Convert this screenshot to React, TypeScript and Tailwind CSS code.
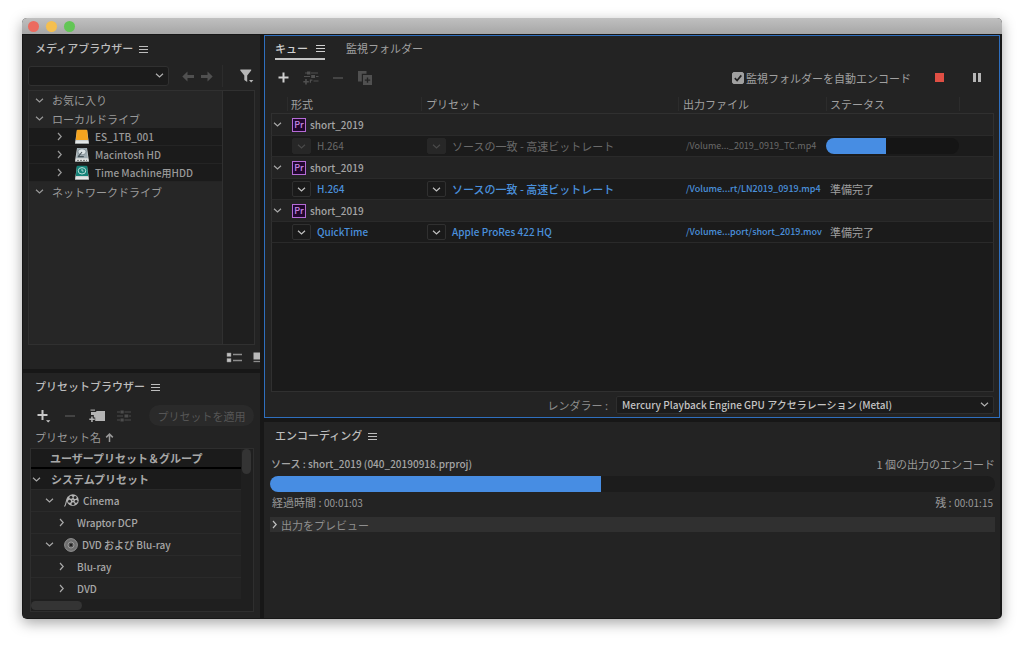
import React, { useState } from 'react';

interface SvgProps {
  className?: string;
}

const ChevronDown: React.FC<SvgProps> = ({ className = '' }) => (
  <svg viewBox="0 0 9 9" className={`w-[9px] h-[9px] shrink-0 ${className}`} fill="none" stroke="currentColor" strokeWidth="1.2">
    <path d="M1 2.8 4.5 6 8 2.8" />
  </svg>
);

const ChevronRight: React.FC<SvgProps> = ({ className = '' }) => (
  <svg viewBox="0 0 9 9" className={`w-[9px] h-[9px] shrink-0 ${className}`} fill="none" stroke="currentColor" strokeWidth="1.2">
    <path d="M3 1 6.2 4.5 3 8" />
  </svg>
);

const Menu: React.FC = () => (
  <svg viewBox="0 0 9 9" className="w-[9px] h-[9px]" fill="none" stroke="currentColor" strokeWidth="1">
    <path d="M0 1.5h9M0 4.5h9M0 7.5h9" />
  </svg>
);

const ArrowLeft: React.FC<SvgProps> = ({ className = '' }) => (
  <svg viewBox="0 0 12 11" className={`w-3 h-[11px] ${className}`} fill="currentColor">
    <path d="M0.3 5.5 5.5 0.5V3.9H12V7.1H5.5V10.5Z" />
  </svg>
);

const Funnel: React.FC = () => (
  <svg viewBox="0 0 14 14" className="w-3.5 h-3.5" fill="currentColor">
    <path d="M0.3 0.5H11.2V1.6L7.2 6.6V13L4.3 11V6.6L0.3 1.6Z" />
    <path d="M9 11h4.4L11.2 13.4Z" />
  </svg>
);

const Plus: React.FC = () => (
  <svg viewBox="0 0 11 11" className="w-[11px] h-[11px]" stroke="currentColor" strokeWidth="2">
    <path d="M5.5 0.5v10M0.5 5.5h10" />
  </svg>
);

const PlusMenu: React.FC = () => (
  <svg viewBox="0 0 15 15" className="w-[15px] h-[15px]" fill="currentColor">
    <path d="M5.5 2h2v4h4v2h-4v4h-2V8h-4V6h4Z" />
    <path d="M10 12.2h4.4L12.2 14.6Z" />
  </svg>
);

const Minus: React.FC = () => (
  <svg viewBox="0 0 10 10" className="w-2.5 h-2.5" stroke="currentColor" strokeWidth="1.6">
    <path d="M0 5h10" />
  </svg>
);

const NewFolder: React.FC = () => (
  <svg viewBox="0 0 16 14" className="w-4 h-3.5" fill="currentColor">
    <path d="M1.5 0.6H6V1.6H1.5Z" />
    <path d="M2 3H6.6L7.8 2H16V12H6.2V8.4H4.8V6H2Z" />
    <path d="M2.2 7.4h1.5v2h2v1.5h-2v2H2.2v-2H0.3V9.4h1.9Z" />
  </svg>
);

const Sliders: React.FC = () => (
  <svg viewBox="0 0 14 12" className="w-3.5 h-3" fill="currentColor">
    <path d="M0 1.5h3v1H0ZM7.5 1.5H14v1H7.5ZM0 5.5h6v1H0ZM12 5.5h2v1h-2ZM0 9.5h3v1H0ZM7.5 9.5H14v1H7.5Z" />
    <path d="M3.5 0.5h3.2v3H3.5ZM7.5 4.5h3.8v3H7.5ZM3.5 8.5h3.2v3H3.5Z" />
  </svg>
);

const AddPreset: React.FC = () => (
  <svg viewBox="0 0 16 14" className="w-4 h-3.5" fill="currentColor">
    <path d="M2 1.5h2v1H2ZM8 1.5h7v1H8ZM1 5h6v1H1ZM13 5h2.5v1H13ZM10.5 9.5h5v1h-5Z" />
    <path d="M4 0.5h3.4v3H4ZM8.2 4h3.8v3H8.2ZM6.8 8.5h2.6v1.2H8v2H6.8Z" />
    <path d="M2.2 8h1.6v2h2v1.5h-2v2H2.2v-2H0.3V10h1.9Z" />
  </svg>
);

const Duplicate: React.FC = () => (
  <svg viewBox="0 0 14 14" className="w-3.5 h-3.5" fill="currentColor">
    <path d="M0 0h8.5v2.8H3.8V10.5H0Z" />
    <path fillRule="evenodd" d="M5 4h9v10H5ZM8.8 6.4v2h-2v1.4h2v2h1.4v-2h2V8.4h-2v-2Z" />
  </svg>
);

const ListView: React.FC = () => (
  <svg viewBox="0 0 17 11" className="w-[17px] h-[11px]">
    <path d="M1 1h4v3.6H1ZM1 6.4h4V10H1Z" fill="#c0c0c0" stroke="#8a8a8a" strokeWidth="0.5" />
    <path d="M7 2.5h9M7 8.5h9" stroke="#8d8d8d" strokeWidth="1.3" />
  </svg>
);

const ThumbView: React.FC = () => (
  <svg viewBox="0 0 7 11" className="w-[7px] h-[11px]">
    <path d="M0.5 0.5H7V7.5H0.5Z" fill="#b8b8b8" />
    <path d="M0.5 9.5H7" stroke="#8d8d8d" strokeWidth="1.3" />
  </svg>
);

interface DriveProps {
  kind: 'external' | 'internal' | 'backup';
}

const Drive: React.FC<DriveProps> = ({ kind }) => (
  <svg viewBox="0 0 14 16" className="w-3.5 h-4 shrink-0">
    <path d="M2 1h10l1.6 10.5v3.2H0.4v-3.2Z" fill="#cfd3d3" />
    <path d="M0.4 12.2h13.2v2.6H0.4Z" fill="#e6e9e9" />
    <path d="M0.4 14.2h13.2v0.8H0.4Z" fill="#8b9090" />
    {kind === 'external' && <path d="M2.6 0.8h8.8q0.8 0 0.9 0.8l0.8 9.4H0.9l0.8-9.4q0.1-0.8 0.9-0.8Z" fill="#f5a41f" />}
    {kind === 'backup' && (
      <>
        <path d="M2.6 0.8h8.8q0.8 0 0.9 0.8l0.8 9.4H0.9l0.8-9.4q0.1-0.8 0.9-0.8Z" fill="#148278" />
        <ellipse cx="7" cy="5.8" rx="3.8" ry="3.2" fill="none" stroke="#b9dfd9" strokeWidth="1" />
        <path d="M7 3.8v2.2h1.6" fill="none" stroke="#b9dfd9" strokeWidth="0.9" />
      </>
    )}
    {kind === 'internal' && (
      <>
        <path d="M2.2 1h9.6l1 10H1.2Z" fill="#9eabb1" />
        <ellipse cx="7" cy="4.8" rx="4" ry="3" fill="#dde4e7" stroke="#68757c" strokeWidth="0.6" />
        <path d="M7 5 3.4 9.4M2.8 9.6h6" stroke="#48545a" strokeWidth="1.1" />
        <path d="M2 13.4h10" stroke="#555" strokeWidth="0.8" strokeDasharray="2 1" />
      </>
    )}
  </svg>
);

const FilmReel: React.FC = () => (
  <svg viewBox="0 0 15 13" className="w-[15px] h-[13px] shrink-0">
    <path d="M0.5 12.5C2.5 10.5 1.6 6 4.4 2.6" fill="none" stroke="#b0b0b0" strokeWidth="1.1" />
    <circle cx="8.8" cy="6.2" r="5.9" fill="#b4b4b4" />
    <g fill="#262626">
      <circle cx="7" cy="3.3" r="1.5" />
      <circle cx="11.1" cy="3.6" r="1.5" />
      <circle cx="12.1" cy="7.4" r="1.4" />
      <circle cx="9" cy="9.7" r="1.5" />
      <circle cx="5.5" cy="7.2" r="1.5" />
      <circle cx="8.9" cy="6.3" r="0.6" />
    </g>
  </svg>
);

const Disc: React.FC = () => (
  <svg viewBox="0 0 14 14" className="w-3.5 h-3.5 shrink-0">
    <circle cx="7" cy="7" r="6.4" fill="#6f6f6f" stroke="#9a9a9a" strokeWidth="0.9" />
    <circle cx="7" cy="7" r="3" fill="#515151" stroke="#a8a8a8" strokeWidth="0.8" />
    <circle cx="7" cy="7" r="1.2" fill="#202020" />
  </svg>
);

const PremiereBadge: React.FC = () => (
  <span className="flex w-3.5 h-3.5 shrink-0 items-center justify-center border border-[#b56bd6] bg-[#22072f] text-[9px] leading-none text-[#c98ae6]">
    Pr
  </span>
);

interface PanelTitleProps {
  title: string;
  className?: string;
}

const PanelTitle: React.FC<PanelTitleProps> = ({ title, className = '' }) => (
  <div className={`flex shrink-0 items-center gap-1 text-[#bdbdbd] ${className}`}>
    <h2 className="font-medium">{title}</h2>
    <button aria-label="パネルメニュー" className="px-0.5 pt-0.5">
      <Menu />
    </button>
  </div>
);

const drives: { name: string; kind: DriveProps['kind'] }[] = [
  { name: 'ES_1TB_001', kind: 'external' },
  { name: 'Macintosh HD', kind: 'internal' },
  { name: 'Time Machine用HDD', kind: 'backup' },
];

const MediaBrowser: React.FC = () => (
  <section className="flex min-h-0 flex-col overflow-hidden bg-[#232323] pl-[5px]">
    <PanelTitle title="メディアブラウザー" className="h-[26px] pl-[7px]" />

    <div className="mt-1 flex h-[22px] shrink-0 items-center pr-[5px]">
      <div className="relative w-[141px]">
        <select
          aria-label="場所"
          className="block h-5 w-full appearance-none rounded-[3px] border border-[#303030] bg-[#1b1b1b] px-1.5"
        >
          <option value=""></option>
        </select>
        <ChevronDown className="pointer-events-none absolute right-[5px] top-[5px] text-[#b0b0b0]" />
      </div>
      <div className="ml-[13px] flex gap-[7px] text-[#505050]">
        <button aria-label="戻る"><ArrowLeft /></button>
        <button aria-label="進む"><ArrowLeft className="rotate-180" /></button>
      </div>
      <button aria-label="フィルター" className="ml-auto flex h-full w-[33px] items-center justify-end border-l border-[#2c2c2c] pr-px text-[#b5b5b5]">
        <Funnel />
      </button>
    </div>

    <div className="mr-[5px] mt-[3px] flex min-h-0 flex-1 border border-[#303030] bg-[#1f1f1f]">
      <ul className="flex-1 bg-[#262626] text-[#999]">
        <li className="flex h-[18px] items-center gap-2 pl-1.5">
          <ChevronDown />
          お気に入り
        </li>
        <li>
          <div className="flex h-[19px] items-center gap-2 pl-1.5">
            <ChevronDown />
            ローカルドライブ
          </div>
          <ul>
            {drives.map((drive) => (
              <li key={drive.name} className="flex h-[18px] items-center border-b border-[#242424] bg-[#1b1b1b] pl-[26px]">
                <ChevronRight />
                <span className="ml-[11px] mr-1.5 flex"><Drive kind={drive.kind} /></span>
                <span className="text-[10px] font-medium">{drive.name}</span>
              </li>
            ))}
          </ul>
        </li>
        <li className="flex h-[19px] items-center gap-2 pl-1.5">
          <ChevronDown />
          ネットワークドライブ
        </li>
      </ul>
      <div className="w-8 border-l border-[#303030]" />
    </div>

    <div className="flex h-6 shrink-0 items-center justify-end gap-2.5">
      <button aria-label="リスト表示"><ListView /></button>
      <button aria-label="サムネイル表示"><ThumbView /></button>
    </div>
  </section>
);

interface PresetRow {
  label: string;
  level: number;
  open: boolean;
  icon?: React.ReactNode;
}

const presetRows: PresetRow[] = [
  { label: 'Cinema', level: 1, open: true, icon: <FilmReel /> },
  { label: 'Wraptor DCP', level: 2, open: false },
  { label: 'DVD および Blu-ray', level: 1, open: true, icon: <Disc /> },
  { label: 'Blu-ray', level: 2, open: false },
  { label: 'DVD', level: 2, open: false },
];

const PresetBrowser: React.FC = () => (
  <section className="flex min-h-0 flex-col bg-[#232323] pl-[7px] pr-1.5 pb-1.5">
    <PanelTitle title="プリセットブラウザー" className="h-[26px] pl-[5px]" />

    <div className="mt-1.5 flex h-[21px] shrink-0 items-center pl-1.5">
      <button aria-label="新規プリセット" className="text-[#c8c8c8]"><PlusMenu /></button>
      <button aria-label="プリセットを削除" disabled className="ml-3.5 text-[#4c4c4c]"><Minus /></button>
      <button aria-label="新規グループ" className="ml-3.5 text-[#b5b5b5]"><NewFolder /></button>
      <button aria-label="プリセット設定" disabled className="ml-3 text-[#4c4c4c]"><Sliders /></button>
      <button disabled className="ml-auto h-[21px] w-[105px] rounded-full bg-[#2a2a2a] text-[#565656]">
        プリセットを適用
      </button>
    </div>

    <div className="flex h-[22px] shrink-0 items-center gap-1 pl-[5px] text-[#999]">
      プリセット名
      <svg viewBox="0 0 9 9" className="w-[9px] h-[9px]" fill="none" stroke="currentColor" strokeWidth="1.5">
        <path d="M4.5 9V1.2M1.2 4.4 4.5 1.1 7.8 4.4" />
      </svg>
    </div>

    <div className="flex min-h-0 flex-1 flex-col border border-[#2e2e2e] bg-[#1f1f1f]">
      <div className="flex min-h-0 flex-1">
        <ul className="flex min-w-0 flex-1 flex-col font-medium text-[#a8a8a8]">
          <li className="flex h-5 shrink-0 items-center border-b-2 border-black bg-[#1b1b1b] pl-[19px] font-bold">
            ユーザープリセット＆グループ
          </li>
          <li className="flex h-5 shrink-0 items-center gap-2.5 bg-[#1b1b1b] pl-px font-bold">
            <ChevronDown />
            システムプリセット
          </li>
          {presetRows.map((row) => (
            <li
              key={row.label}
              className={`flex flex-1 items-center border-t border-[#2a2a2a] bg-[#232323] text-[10px] ${row.level === 1 ? 'gap-1 pl-3.5' : 'gap-[11px] pl-[26px]'}`}
            >
              {row.open ? <ChevronDown /> : <ChevronRight />}
              {row.icon && <span className="ml-1.5">{row.icon}</span>}
              {row.label}
            </li>
          ))}
        </ul>
        <div className="w-3 pl-px">
          <div className="h-[25px] w-[9px] rounded-full bg-[#343434]" />
        </div>
      </div>
      <div className="flex h-3 shrink-0 items-center">
        <div className="h-[9px] w-[51px] rounded-full bg-[#343434]" />
      </div>
    </div>
  </section>
);

interface Job {
  source: string;
  format: string;
  preset: string;
  output: string;
  progress?: number;
}

const jobs: Job[] = [
  { source: 'short_2019', format: 'H.264', preset: 'ソースの一致 - 高速ビットレート', output: '/Volume..._2019_0919_TC.mp4', progress: 45 },
  { source: 'short_2019', format: 'H.264', preset: 'ソースの一致 - 高速ビットレート', output: '/Volume...rt/LN2019_0919.mp4' },
  { source: 'short_2019', format: 'QuickTime', preset: 'Apple ProRes 422 HQ', output: '/Volume...port/short_2019.mov' },
];

interface SettingProps {
  label: string;
  menuLabel: string;
  disabled: boolean;
  className?: string;
}

const Setting: React.FC<SettingProps> = ({ label, menuLabel, disabled, className = '' }) => (
  <div className={`flex items-center gap-1.5 ${className}`}>
    <button
      aria-label={menuLabel}
      disabled={disabled}
      className={`flex h-4 w-[19px] shrink-0 items-center justify-center rounded-[2px] border ${
        disabled ? 'border-[#272727] bg-[#272727] text-[#4a4a4a]' : 'border-[#303030] bg-[#1a1a1a] text-[#c0c0c0]'
      }`}
    >
      <ChevronDown />
    </button>
    {disabled ? <span>{label}</span> : <a href="#" className="font-medium text-[#4a90dc]">{label}</a>}
  </div>
);

const QueueTable: React.FC = () => (
  <table className="w-full shrink-0 table-fixed border-separate border-spacing-0 text-left">
    <colgroup>
      <col className="w-4" />
      <col className="w-[134px]" />
      <col />
      <col className="w-[148px]" />
      <col className="w-[133px]" />
      <col className="w-[35px]" />
    </colgroup>
    <thead>
      <tr className="h-[19px] text-[#a0a0a0] [&>th]:border-b [&>th]:border-b-[#303030] [&>th]:p-0 [&>th]:font-normal">
        <th></th>
        <th><div className="border-l border-[#2c2c2c] pl-[3px] leading-[14px]">形式</div></th>
        <th><div className="border-l border-[#2c2c2c] pl-1 leading-[14px]">プリセット</div></th>
        <th><div className="border-l border-[#2c2c2c] pl-1 leading-[14px]">出力ファイル</div></th>
        <th><div className="border-l border-[#2c2c2c] pl-[3px] leading-[14px]">ステータス</div></th>
        <th><div className="h-3.5 border-l border-[#2c2c2c]" /></th>
      </tr>
    </thead>
    <tbody className="[&_td]:border-b [&_td]:border-b-[#2a2a2a] [&_td]:p-0">
      {jobs.map((job, i) => {
        const encoding = job.progress !== undefined;
        return (
          <React.Fragment key={i}>
            <tr className="h-[22px]">
              <td className="border-l border-l-[#303030]">
                <button aria-label="折りたたむ" className="flex pl-px text-[#a8a8a8]"><ChevronDown /></button>
              </td>
              <td colSpan={5} className="border-r border-r-[#303030]">
                <div className="flex items-center gap-1 pl-[5px] text-[10px] font-medium text-[#a5a5a5]">
                  <PremiereBadge />
                  {job.source}
                </div>
              </td>
            </tr>
            <tr className={`h-[21px] bg-[#1b1b1b] ${encoding ? 'text-[#6a6a6a]' : 'text-[#a0a0a0]'}`}>
              <td className="border-l border-l-[#303030]"></td>
              <td>
                <Setting label={job.format} menuLabel="形式を変更" disabled={encoding} className="pl-[5px] text-[10px]" />
              </td>
              <td>
                <Setting
                  label={job.preset}
                  menuLabel="プリセットを変更"
                  disabled={encoding}
                  className={`pl-1.5 ${job.format === 'QuickTime' ? 'text-[10px]' : ''}`}
                />
              </td>
              <td>
                <div className="whitespace-nowrap pl-2 text-[9px]">
                  {encoding ? job.output : <a href="#" className="font-medium text-[#4a90dc]">{job.output}</a>}
                </div>
              </td>
              <td>
                {encoding ? (
                  <div className="h-4 overflow-hidden rounded-full bg-[#151515]" role="progressbar" aria-label="エンコード状況" aria-valuenow={job.progress}>
                    <div className="h-full bg-[#478de3]" style={{ width: `${job.progress}%` }} />
                  </div>
                ) : (
                  <span className="pl-1">準備完了</span>
                )}
              </td>
              <td className="border-r border-r-[#303030]"></td>
            </tr>
          </React.Fragment>
        );
      })}
    </tbody>
  </table>
);

const QueuePanel: React.FC = () => {
  const [autoEncode, setAutoEncode] = useState(true);

  return (
    <section className="flex min-h-0 flex-col border border-[#2f6fbe] bg-[#232323] pl-1.5 pr-[5px]">
      <div className="flex h-6 shrink-0 gap-[21px] pl-1">
        <div className="flex items-center gap-2 border-b-2 border-[#c4c4c4] pt-0.5 text-[#d0d0d0]">
          <button className="font-medium">キュー</button>
          <button aria-label="パネルメニュー" className="pt-px"><Menu /></button>
        </div>
        <button className="text-[#a0a0a0]">監視フォルダー</button>
      </div>

      <div className="flex h-[35px] shrink-0 items-center pl-[7px] text-[#505050]">
        <button aria-label="ソースを追加" className="text-[#d0d0d0]"><Plus /></button>
        <button aria-label="出力を追加" disabled className="ml-3.5"><AddPreset /></button>
        <button aria-label="削除" disabled className="ml-3.5"><Minus /></button>
        <button aria-label="複製" disabled className="ml-[15px]"><Duplicate /></button>
        <label className="ml-auto flex items-center gap-0.5 text-[#a0a0a0]">
          <span className="relative flex">
            <input
              type="checkbox"
              checked={autoEncode}
              onChange={(e) => setAutoEncode(e.target.checked)}
              className="h-3 w-3 appearance-none rounded-[2px] border border-[#a0a0a0] checked:bg-[#a0a0a0]"
            />
            {autoEncode && (
              <svg viewBox="0 0 12 12" className="pointer-events-none absolute inset-0" fill="none" stroke="#232323" strokeWidth="1.7">
                <path d="M2.8 6.2 5.1 8.5 9.3 3.4" />
              </svg>
            )}
          </span>
          監視フォルダーを自動エンコード
        </label>
        <button aria-label="キューを停止" className="ml-6 h-[9px] w-[9px] bg-[#e04f44]" />
        <button aria-label="一時停止" className="ml-7 mr-3 flex gap-0.5 px-px">
          <span className="h-[9px] w-[3px] bg-[#b5b5b5]" />
          <span className="h-[9px] w-[3px] bg-[#b5b5b5]" />
        </button>
      </div>

      <QueueTable />
      <div className="flex-1 border-x border-b border-[#303030] bg-[#1b1b1b]" />

      <div className="flex h-[25px] shrink-0 items-center justify-end gap-2">
        <label htmlFor="renderer" className="text-[#8c8c8c]">レンダラー :</label>
        <div className="relative w-[378px]">
          <select
            id="renderer"
            className="block h-[18px] w-full appearance-none rounded-[2px] border border-[#2e2e2e] bg-[#1b1b1b] pl-[5px] text-[10px] font-medium leading-4 text-[#c4c4c4]"
          >
            <option>Mercury Playback Engine GPU アクセラレーション (Metal)</option>
          </select>
          <ChevronDown className="pointer-events-none absolute right-[5px] top-1 text-[#b0b0b0]" />
        </div>
      </div>
    </section>
  );
};

const elapsed = 63;
const remaining = 75;

const formatTime = (seconds: number) =>
  `00:${String(Math.floor(seconds / 60)).padStart(2, '0')}:${String(seconds % 60).padStart(2, '0')}`;

const EncodingPanel: React.FC = () => {
  const percent = (elapsed / (elapsed + remaining)) * 100;

  return (
    <section className="flex min-h-0 flex-col bg-[#232323] pl-1.5 pr-[5px] text-[#999]">
      <PanelTitle title="エンコーディング" className="h-[26px] pl-[5px]" />
      <div className="mt-1 flex h-6 shrink-0 items-center justify-between pl-px">
        <span className="text-[10px] font-medium text-[#a5a5a5]">ソース : short_2019 (040_20190918.prproj)</span>
        <span>1 個の出力のエンコード</span>
      </div>
      <div className="h-4 shrink-0 overflow-hidden rounded-full bg-[#1c1c1c]" role="progressbar" aria-label="エンコードの進行状況" aria-valuenow={Math.round(percent)}>
        <div className="h-full bg-[#478de3]" style={{ width: `${percent}%` }} />
      </div>
      <div className="flex h-5 shrink-0 items-center justify-between px-0.5">
        <span>経過時間 : <span className="text-[10px]">{formatTime(elapsed)}</span></span>
        <span>残 : <span className="text-[10px]">{formatTime(remaining)}</span></span>
      </div>
      <button className="mt-[5px] flex h-[15px] shrink-0 items-center gap-0.5 bg-[#303030] text-[#8f8f8f]">
        <ChevronRight className="text-[#c0c0c0]" />
        出力をプレビュー
      </button>
    </section>
  );
};

export default function App() {
  return (
    <main className="flex h-screen min-h-[480px] bg-white pb-[26px] pl-[22px] pr-[22px] pt-[18px] font-['Noto_Sans_CJK_JP',sans-serif] text-[11px] leading-4 select-none">
      <div className="flex min-w-0 flex-1 flex-col overflow-hidden rounded-[5px] bg-[#171717] shadow-[0_4px_14px_rgba(0,0,0,0.35)]">
        <header className="flex h-4 shrink-0 items-center gap-[7px] bg-linear-to-b from-[#c0c0c0] to-[#a6a6a6] pl-1.5">
          <button aria-label="閉じる" className="h-[11px] w-[11px] rounded-full bg-[#ec6b5f]" />
          <button aria-label="しまう" className="h-[11px] w-[11px] rounded-full bg-[#f5bf4f]" />
          <button aria-label="拡大" className="h-[11px] w-[11px] rounded-full bg-[#62c655]" />
        </header>
        <div className="grid min-h-0 flex-1 grid-cols-[237px_1fr] gap-1 p-px pr-0.5">
          <div className="grid min-h-0 grid-rows-[334fr_245fr] gap-1">
            <MediaBrowser />
            <PresetBrowser />
          </div>
          <div className="grid min-h-0 min-w-0 grid-rows-[383fr_196fr] gap-1">
            <QueuePanel />
            <EncodingPanel />
          </div>
        </div>
      </div>
    </main>
  );
}
